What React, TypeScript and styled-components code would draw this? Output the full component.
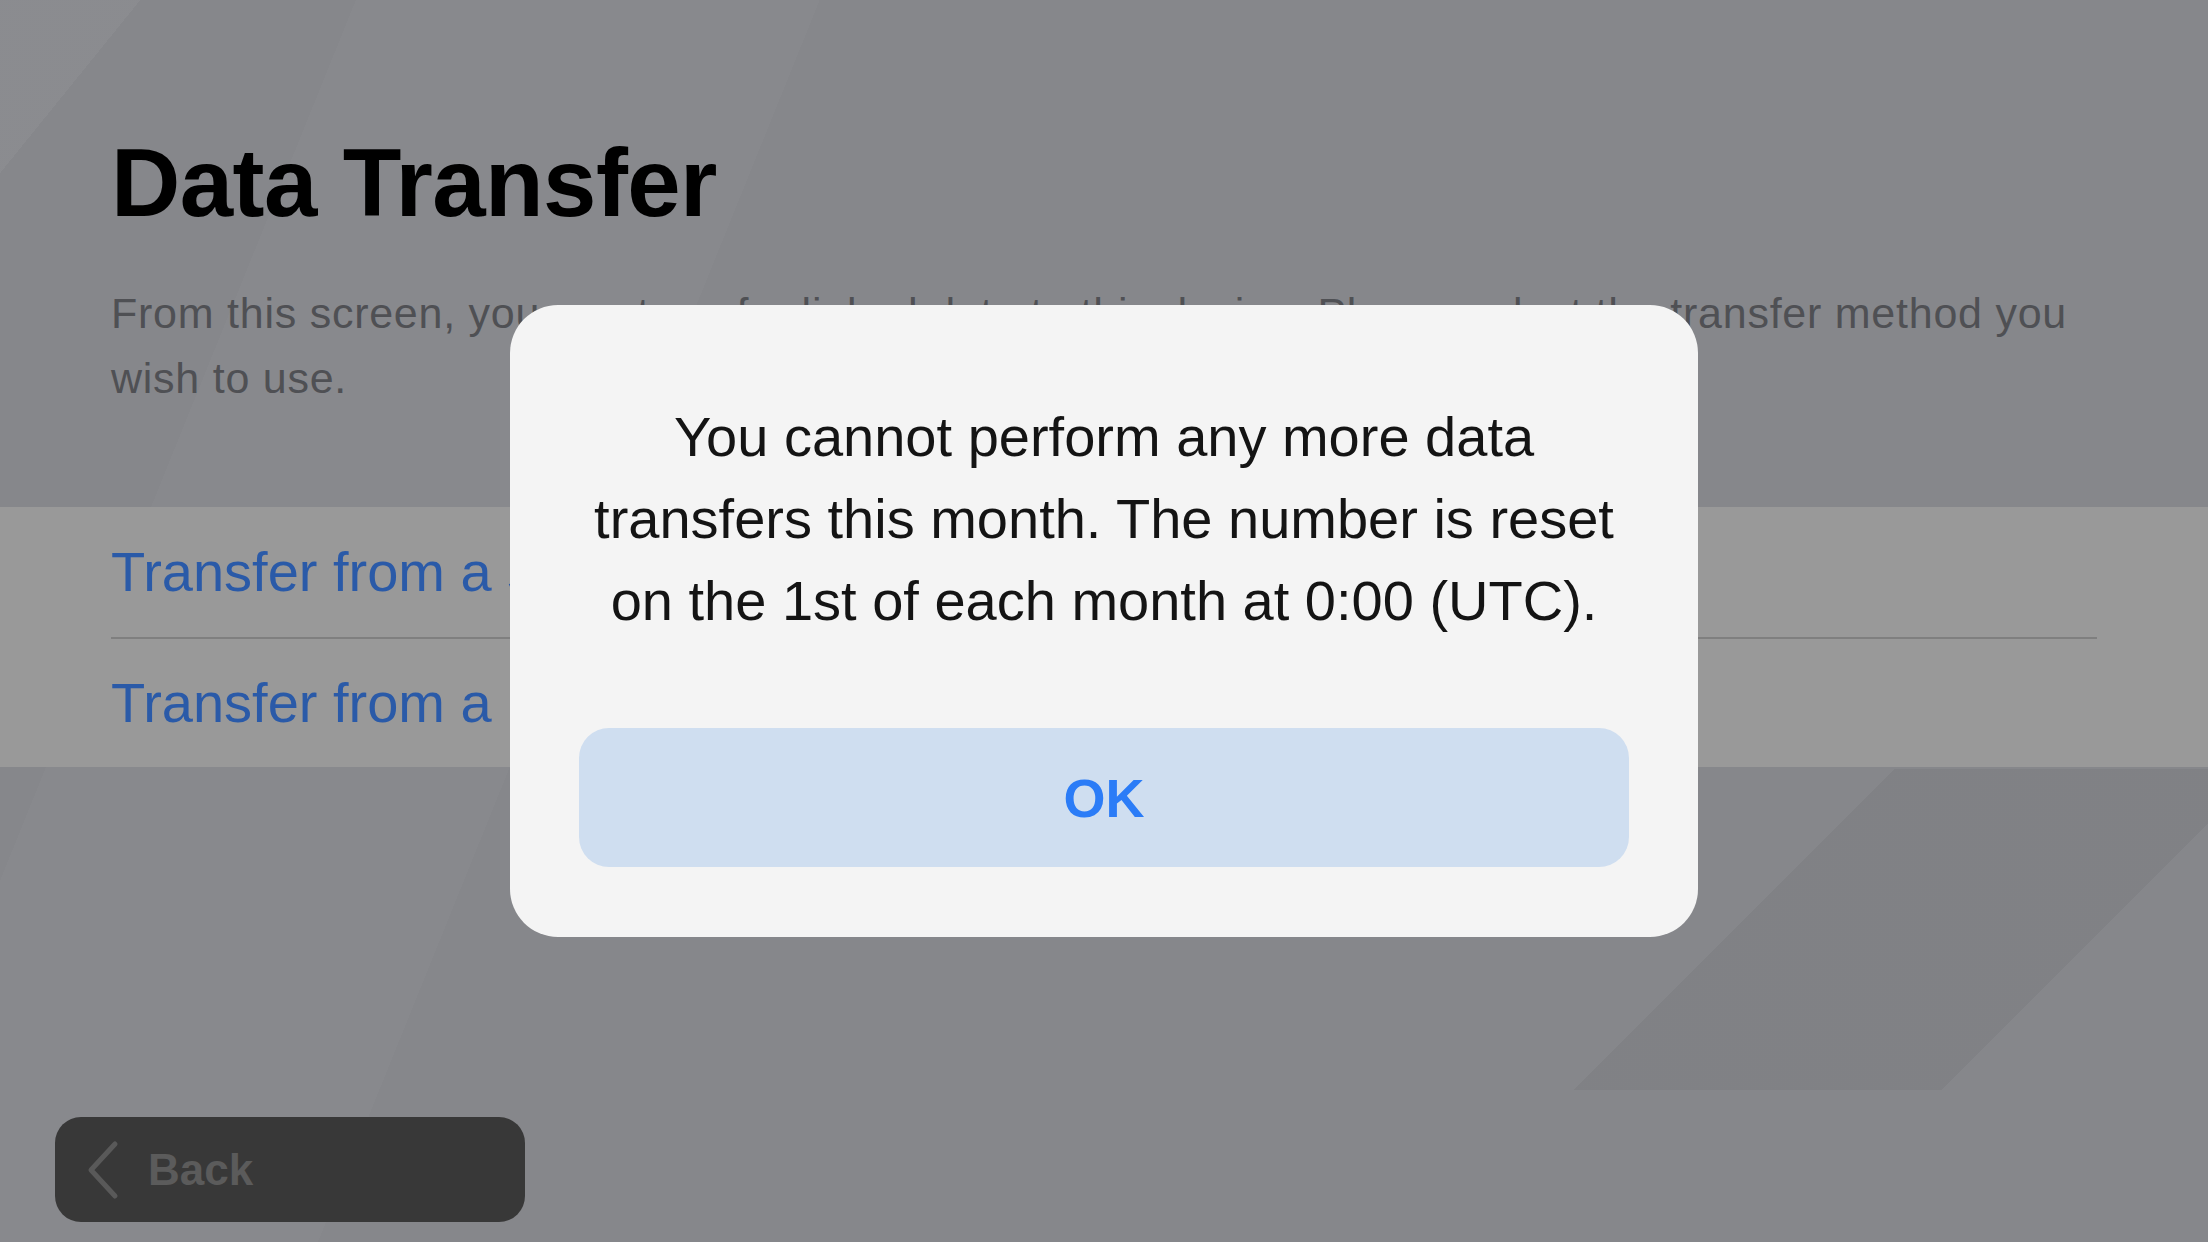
import type { FC } from 'react';
import styled, { createGlobalStyle } from 'styled-components';

const GlobalStyle = createGlobalStyle`
  * {
    box-sizing: border-box;
  }

  body {
    margin: 0;
    overflow: hidden;
    font-family: 'Liberation Sans', Arial, sans-serif;
    background: #86878b;
  }
`;

const Screen = styled.div`
  position: relative;
  width: 2208px;
  height: 1242px;
  overflow: hidden;
  display: flex;
  flex-direction: column;
  background:
    linear-gradient(135deg, transparent 228px, rgba(0, 0, 0, 0.045) 228px, rgba(0, 0, 0, 0.045) 488px, transparent 488px)
      1572px 769px / 636px 321px no-repeat,
    linear-gradient(129deg, rgba(255, 255, 255, 0.04) 109px, transparent 109px),
    linear-gradient(112deg, transparent 330px, rgba(255, 255, 255, 0.02) 330px, rgba(255, 255, 255, 0.02) 760px, transparent 760px),
    #86878b;
`;

const Header = styled.header`
  padding: 135px 111px 0;
`;

const Title = styled.h1`
  margin: 0;
  font-size: 96px;
  line-height: 96px;
  font-weight: 700;
  letter-spacing: -0.6px;
  color: #000;
`;

const Intro = styled.p`
  margin: 50px 0 0;
  width: 1990px;
  font-size: 43px;
  line-height: 65px;
  letter-spacing: 0.75px;
  color: #4f5054;
`;

const MethodList = styled.ul`
  list-style: none;
  margin: 96px 0 0;
  padding: 0 111px;
  background: #999999;
`;

const MethodItem = styled.li`
  height: 130px;
  display: flex;
  align-items: center;
  font-size: 56px;
  line-height: 1;
  color: #2a5aa8;

  & + & {
    border-top: 2px solid #7f7f7f;
  }
`;

const Footer = styled.footer`
  flex: 1;
  display: flex;
  align-items: flex-end;
  padding: 0 0 20px 55px;
`;

const BackButton = styled.button`
  width: 470px;
  height: 105px;
  display: flex;
  align-items: center;
  gap: 29px;
  padding: 0 0 0 30px;
  border: none;
  border-radius: 26px;
  background: #383838;
  color: #5b5b5b;
  font-family: inherit;
  font-size: 44px;
  font-weight: 700;
`;

const Scrim = styled.div`
  position: absolute;
  inset: 0;
  display: flex;
  align-items: center;
  justify-content: center;
`;

const Dialog = styled.div`
  width: 1188px;
  height: 632px;
  padding: 91px 69px 70px;
  display: flex;
  flex-direction: column;
  align-items: center;
  border-radius: 48px;
  background: #f4f4f4;
`;

const Message = styled.p`
  margin: 0;
  width: 1050px;
  text-align: center;
  font-size: 56px;
  line-height: 82px;
  color: #141414;
`;

const OkButton = styled.button`
  margin-top: 86px;
  width: 100%;
  height: 139px;
  border: none;
  border-radius: 30px;
  background: #cfdef0;
  color: #2b7cf7;
  font-family: inherit;
  font-size: 54px;
  font-weight: 700;
`;

const Chevron: FC = () => (
  <svg width="34" height="60" viewBox="0 0 34 60" fill="none">
    <polyline
      points="30,4 6,30 30,56"
      stroke="#595959"
      strokeWidth="5"
      strokeLinecap="round"
      strokeLinejoin="round"
    />
  </svg>
);

const App: FC = () => {
  return (
    <>
      <GlobalStyle />
      <Screen>
        <Header>
          <Title>Data Transfer</Title>
          <Intro>
            From this screen, you can transfer linked data to this device. Please select the transfer method you wish to use.
          </Intro>
        </Header>

        <MethodList>
          <MethodItem>Transfer from a smart device</MethodItem>
          <MethodItem>Transfer from a Nintendo Switch system</MethodItem>
        </MethodList>

        <Footer>
          <BackButton>
            <Chevron />
            Back
          </BackButton>
        </Footer>

        <Scrim>
          <Dialog>
            <Message>
              You cannot perform any more data transfers this month. The number is reset on the 1st of each month at 0:00 (UTC).
            </Message>
            <OkButton>OK</OkButton>
          </Dialog>
        </Scrim>
      </Screen>
    </>
  );
};

export default App;
